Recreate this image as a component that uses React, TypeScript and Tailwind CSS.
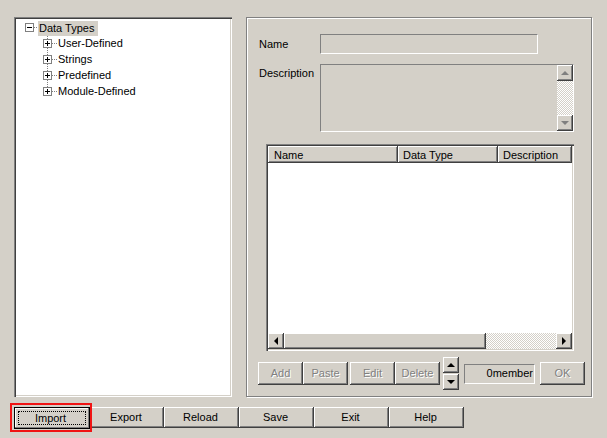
const raised =
  "bg-[#d4d0c8] shadow-[inset_-1px_-1px_0_#404040,inset_1px_1px_0_#fff,inset_-2px_-2px_0_#808080]";
const sunken = "border border-t-[#808080] border-l-[#808080] border-r-white border-b-white";
const deep =
  "shadow-[inset_1px_1px_0_#808080,inset_2px_2px_0_#404040,inset_-1px_-1px_0_#fff,inset_-2px_-2px_0_#d4d0c8]";
const dither = "bg-[repeating-conic-gradient(#d4d0c8_0_25%,#fff_0_50%)] bg-[length:2px_2px]";

function TreeIcon({ open, last, child }: { open?: boolean; last?: boolean; child?: boolean }) {
  const size = 9;
  return (
    <svg width="16" height="16" viewBox="0 0 16 16" className="shrink-0" shapeRendering="crispEdges">
      {child && !last && <line x1="4.5" y1="0" x2="4.5" y2="16" stroke="#808080" strokeDasharray="1 1" />}
      {child && last && <line x1="4.5" y1="0" x2="4.5" y2="3" stroke="#808080" strokeDasharray="1 1" />}
      <line x1="9" y1="7.5" x2="15" y2="7.5" stroke="#808080" strokeDasharray="1 1" />
      <rect x="0.5" y="3.5" width={size - 1} height={size - 1} fill="#fff" stroke="#808080" />
      <line x1="2" y1="7.5" x2="7" y2="7.5" stroke="#000" />
      {!open && <line x1="4.5" y1="5" x2="4.5" y2="10" stroke="#000" />}
    </svg>
  );
}

function Arrow({ dir, disabled }: { dir: "up" | "down" | "left" | "right"; disabled?: boolean }) {
  const points = {
    up: "4,0 0,4 8,4",
    down: "0,0 8,0 4,4",
    left: "4,0 4,8 0,4",
    right: "0,0 0,8 4,4",
  }[dir];
  const w = dir === "up" || dir === "down" ? 8 : 4;
  const h = dir === "up" || dir === "down" ? 4 : 8;
  return (
    <svg width={w} height={h} viewBox={`0 0 ${w} ${h}`}>
      <polygon points={points} fill={disabled ? "#808080" : "#000"} />
    </svg>
  );
}

function ArrowBox({ dir, disabled, className }: { dir: "up" | "down" | "left" | "right"; disabled?: boolean; className: string }) {
  return (
    <div className={`flex items-center justify-center ${raised} ${className}`}>
      <Arrow dir={dir} disabled={disabled} />
    </div>
  );
}

function SmallButton({ label, className }: { label: string; className: string }) {
  return (
    <div
      className={`flex h-[23px] items-center justify-center text-[#808080] [text-shadow:1px_1px_0_#fff] ${raised} ${className}`}
    >
      {label}
    </div>
  );
}

function BottomButton({ label, className }: { label: string; className: string }) {
  return <div className={`flex h-[21px] items-center justify-center pr-[2px] ${raised} ${className}`}>{label}</div>;
}

export default function App() {
  const children = ["User-Defined", "Strings", "Predefined", "Module-Defined"];

  return (
    <div className="flex h-[438px] w-[607px] flex-col overflow-hidden bg-[#d4d0c8] pl-[14px] pt-[17px] font-['Liberation_Sans',sans-serif] text-[11px] leading-none text-black">
      <div className="flex h-[380px] gap-[14px]">
        <div className={`h-full w-[218px] bg-white pl-[11px] pt-[3px] ${deep}`}>
          <div className="flex h-[16px] items-start">
            <TreeIcon open />
            <span className="ml-[-3px] mt-[1px] flex h-[15px] items-center bg-[#d4d0c8] pb-[1px] pl-[1px] pr-[4px]">Data Types</span>
          </div>
          {children.map((name, i) => (
            <div key={name} className="ml-[18px] flex h-[16px] items-center">
              <TreeIcon child last={i === children.length - 1} />
              <span className="ml-[-1px] pb-[1px]">{name}</span>
            </div>
          ))}
        </div>

        <div className="h-full w-[346px] border border-[#808080] pl-[12px] pt-[16px] shadow-[inset_1px_1px_0_#fff,1px_1px_0_#fff]">
          <div className="flex h-[20px] items-center">
            <span className="w-[61px]">Name</span>
            <div className={`h-[20px] w-[218px] ${sunken}`} />
          </div>
          <div className="mt-[10px] flex">
            <span className="w-[61px] pt-[4px]">Description</span>
            <div className={`flex h-[68px] w-[254px] justify-end ${sunken}`}>
              <div className="flex w-[16px] flex-col">
                <ArrowBox dir="up" disabled className="h-[16px] w-[16px]" />
                <div className={`flex-1 ${dither}`} />
                <ArrowBox dir="down" disabled className="h-[16px] w-[16px]" />
              </div>
            </div>
          </div>

          <div className={`ml-[7px] mt-[12px] flex h-[207px] w-[308px] flex-col bg-white p-[2px] ${deep}`}>
            <div className="flex h-[17px] shrink-0">
              <div className={`flex w-[130px] items-center pl-[6px] pt-[1px] ${raised}`}>Name</div>
              <div className={`flex w-[100px] items-center pl-[5px] pt-[1px] ${raised}`}>Data Type</div>
              <div className={`flex flex-1 items-center pl-[5px] pt-[1px] ${raised}`}>Description</div>
            </div>
            <div className="flex-1" />
            <div className="flex h-[16px] shrink-0">
              <ArrowBox dir="left" className="h-[16px] w-[16px]" />
              <div className={`h-[16px] w-[202px] ${raised}`} />
              <div className={`h-[16px] flex-1 ${dither}`} />
              <ArrowBox dir="right" className="h-[16px] w-[16px]" />
            </div>
          </div>

          <div className="ml-[-1px] mt-[6px] flex h-[33px] items-center">
            <SmallButton label="Add" className="w-[45px]" />
            <SmallButton label="Paste" className="w-[45px]" />
            <SmallButton label="Edit" className="ml-[2px] w-[45px]" />
            <SmallButton label="Delete" className="w-[45px]" />
            <div className="ml-[3px] flex flex-col gap-[1px]">
              <ArrowBox dir="up" className="h-[16px] w-[16px]" />
              <ArrowBox dir="down" className="h-[16px] w-[16px]" />
            </div>
            <div className={`ml-[5px] flex h-[20px] w-[71px] justify-end pr-[1px] pt-[3px] ${sunken}`}>0member</div>
            <SmallButton label="OK" className="ml-[5px] w-[45px]" />
          </div>
        </div>
      </div>

      <div className="mt-[10px] flex">
        <div className="relative flex h-[22px] w-[76px] items-center justify-center border border-black bg-[#d4d0c8] shadow-[inset_-1px_-1px_0_#808080,inset_1px_1px_0_#fff]">
          <span className="flex h-[14px] w-[68px] items-center justify-center border border-dotted border-black pr-[3px]">Import</span>
          <div className="absolute left-[-5px] top-[-5px] h-[29px] w-[82px] border-2 border-[#f01414]" />
        </div>
        <BottomButton label="Export" className="w-[74px]" />
        <BottomButton label="Reload" className="w-[75px]" />
        <BottomButton label="Save" className="w-[75px]" />
        <BottomButton label="Exit" className="w-[75px]" />
        <BottomButton label="Help" className="w-[75px]" />
      </div>
    </div>
  );
}
